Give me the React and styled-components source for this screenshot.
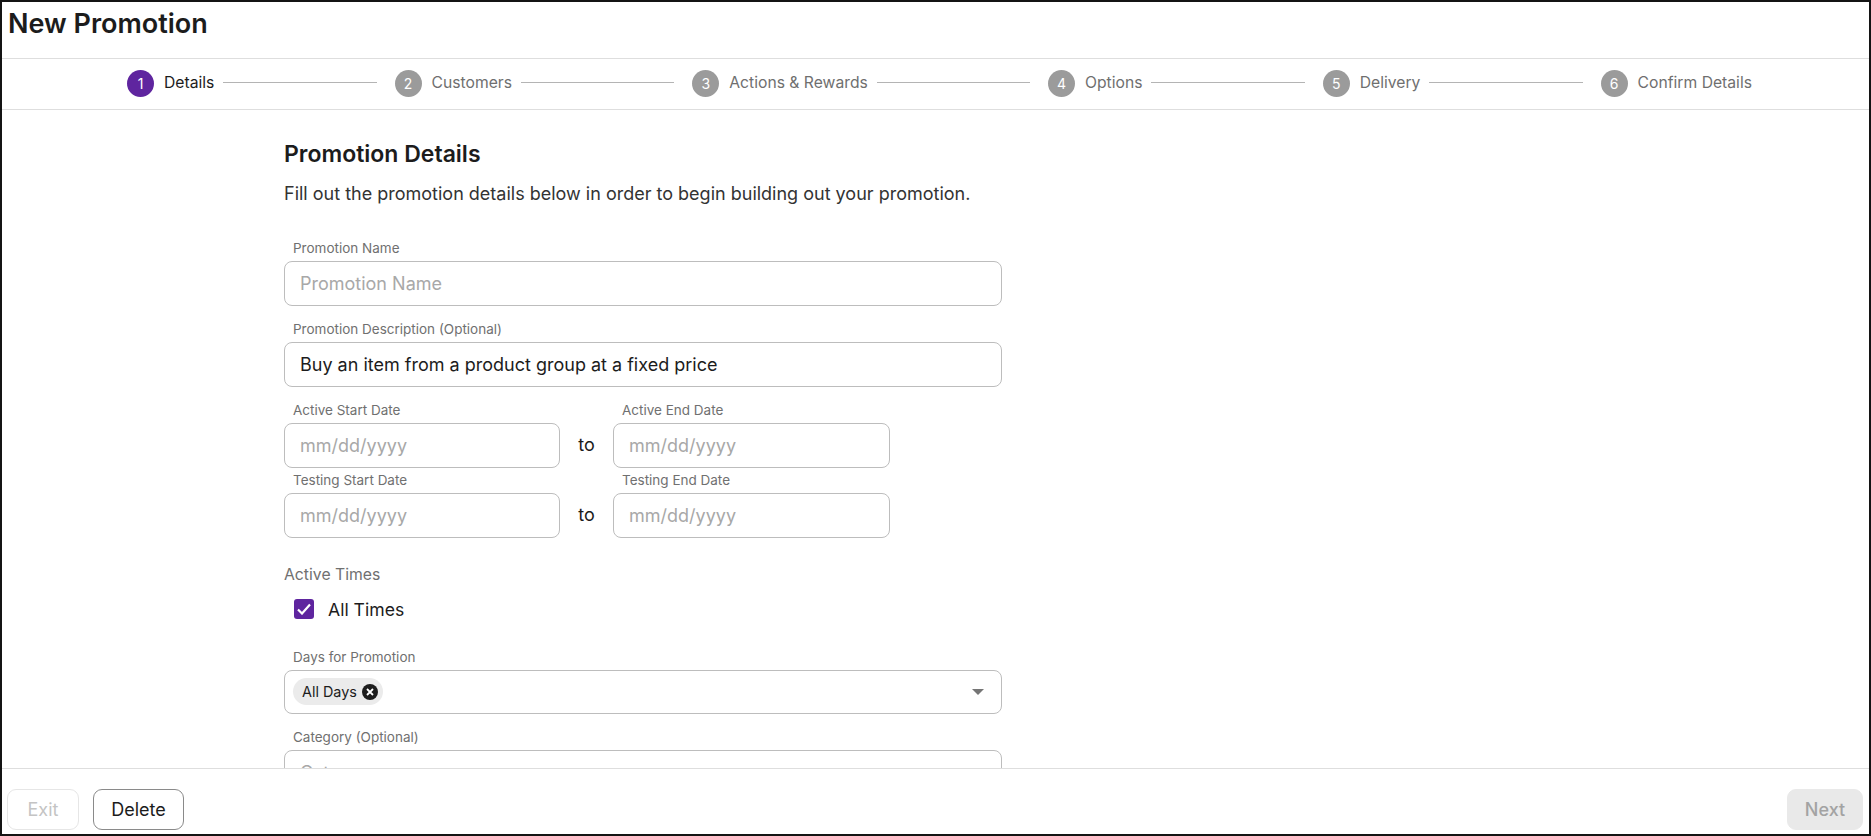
import React from "react";
import styled, { createGlobalStyle } from "styled-components";

const Global = createGlobalStyle`
  html, body { margin: 0; padding: 0; height: 100%; background: #fff; }
  #root { height: 836px; }
  * { box-sizing: border-box; }
`;

const Frame = styled.div`
  width: 1871px;
  height: 836px;
  border: 2px solid #141414;
  display: flex;
  flex-direction: column;
  overflow: hidden;
  font-family: Inter, "Liberation Sans", sans-serif;
  color: #1c1c1c;
  background: #fff;
`;

const Header = styled.header`
  height: 57px;
  flex: none;
  padding: 6px 0 0 6px;
  border-bottom: 1px solid #dedede;
`;

const Title = styled.h1`
  margin: 0;
  font-size: 27px;
  line-height: 32px;
  font-weight: 600;
`;

const Stepper = styled.nav`
  height: 51px;
  flex: none;
  display: flex;
  align-items: center;
  padding: 0 117px 1px 125px;
  border-bottom: 1px solid #dedede;
`;

const Step = styled.div`
  display: flex;
  align-items: center;
  flex: none;
`;

const StepNumber = styled.span`
  width: 27px;
  height: 27px;
  border-radius: 50%;
  display: flex;
  align-items: center;
  justify-content: center;
  font-size: 14px;
  color: #fff;
  background: ${(p) => (p.$active ? "#5f259f" : "#9b9b9b")};
`;

const StepLabel = styled.span`
  margin: 0 0 1px 10px;
  font-size: 15.7px;
  line-height: 20px;
  color: ${(p) => (p.$active ? "#1c1c1c" : "#6f6f6f")};
`;

const Connector = styled.span`
  flex: 1;
  height: 1px;
  margin: -2px 18px 0 9px;
  background: #b4b4b4;
`;

const Main = styled.main`
  flex: 1;
  min-height: 0;
  overflow: hidden;
  padding: 30px 0 0 282px;
`;

const Form = styled.form`
  width: 718px;
`;

const Heading = styled.h2`
  margin: 0;
  font-size: 23px;
  line-height: 28px;
  font-weight: 600;
`;

const Intro = styled.p`
  margin: 12px 0 30px;
  font-size: 18px;
  line-height: 28px;
  color: #333;
  white-space: nowrap;
`;

const Field = styled.div`
  width: ${(p) => p.$width || "718px"};
  margin-bottom: ${(p) => p.$after || "13px"};
`;

const Label = styled.label`
  display: block;
  height: 18px;
  margin: 0 0 5px 9px;
  font-size: 13.5px;
  line-height: 20px;
  color: #707070;
`;

const Input = styled.input`
  display: block;
  width: 100%;
  height: 45px;
  padding: 0 15px;
  border: 1px solid #bdbdbd;
  border-radius: 8px;
  outline: none;
  background: #fff;
  font-family: inherit;
  font-size: 18px;
  color: #1c1c1c;
  &::placeholder { color: #a8a8a8; opacity: 1; }
`;

const DateRow = styled.div`
  display: flex;
  align-items: flex-start;
`;

const To = styled.span`
  width: 53px;
  margin-top: 23px;
  text-align: center;
  font-size: 18px;
  line-height: 44px;
`;

const SectionLabel = styled.div`
  margin-top: 25px;
  font-size: 15.75px;
  line-height: 20px;
  color: #707070;
`;

const CheckRow = styled.label`
  display: flex;
  align-items: center;
  margin: 14px 0 28px 10px;
  height: 20px;
  font-size: 17.6px;
`;

const CheckBox = styled.span`
  width: 20px;
  height: 20px;
  border-radius: 3px;
  background: #5f259f;
  display: flex;
  align-items: center;
  justify-content: center;
  margin-right: 14px;
`;

const Select = styled.div`
  height: 44px;
  margin-bottom: 1px;
  display: flex;
  align-items: center;
  justify-content: space-between;
  padding: 0 17px 1px 8px;
  border: 1px solid #bdbdbd;
  border-radius: 8px;
`;

const Chip = styled.span`
  height: 27px;
  padding: 0 5px 0 9px;
  display: inline-flex;
  align-items: center;
  gap: 5px;
  border-radius: 14px;
  background: #ebebeb;
  font-size: 14.4px;
  color: #1c1c1c;
`;

const Caret = styled.span`
  width: 0;
  height: 0;
  border-left: 6px solid transparent;
  border-right: 6px solid transparent;
  border-top: 6px solid #757575;
`;

const Footer = styled.footer`
  height: 66px;
  flex: none;
  display: flex;
  align-items: flex-start;
  padding: 20px 6px 0 5px;
  border-top: 1px solid #dedede;
  background: #fff;
`;

const Button = styled.button`
  height: 41px;
  width: ${(p) => p.$width};
  margin-right: ${(p) => p.$gap || "0"};
  margin-left: ${(p) => (p.$push ? "auto" : "0")};
  border-radius: 9px;
  border: 1px solid ${(p) => p.$border};
  background: ${(p) => p.$bg || "#fff"};
  color: ${(p) => p.$color};
  font-family: inherit;
  font-size: 18px;
  font-weight: ${(p) => p.$weight || 400};
  padding: 0;
`;

const steps = ["Details", "Customers", "Actions & Rewards", "Options", "Delivery", "Confirm Details"];

const DateField = ({ label, width }) => (
  <Field $width={width} $after="2px">
    <Label>{label}</Label>
    <Input placeholder="mm/dd/yyyy" readOnly />
  </Field>
);

export default function App() {
  return (
    <>
      <Global />
      <Frame>
        <Header>
          <Title>New Promotion</Title>
        </Header>
        <Stepper>
          {steps.map((s, i) => (
            <React.Fragment key={s}>
              <Step>
                <StepNumber $active={i === 0}>{i + 1}</StepNumber>
                <StepLabel $active={i === 0}>{s}</StepLabel>
              </Step>
              {i < steps.length - 1 && <Connector />}
            </React.Fragment>
          ))}
        </Stepper>
        <Main>
          <Form>
            <Heading>Promotion Details</Heading>
            <Intro>Fill out the promotion details below in order to begin building out your promotion.</Intro>
            <Field>
              <Label>Promotion Name</Label>
              <Input placeholder="Promotion Name" readOnly />
            </Field>
            <Field>
              <Label>Promotion Description (Optional)</Label>
              <Input value="Buy an item from a product group at a fixed price" readOnly />
            </Field>
            <DateRow>
              <DateField label="Active Start Date" width="276px" />
              <To>to</To>
              <DateField label="Active End Date" width="277px" />
            </DateRow>
            <DateRow>
              <DateField label="Testing Start Date" width="276px" />
              <To>to</To>
              <DateField label="Testing End Date" width="277px" />
            </DateRow>
            <SectionLabel>Active Times</SectionLabel>
            <CheckRow>
              <CheckBox>
                <svg width="14" height="12" viewBox="0 0 14 12" fill="none">
                  <path d="M1 6.5 L5 10.5 L13 1.5" stroke="#fff" strokeWidth="2.2" />
                </svg>
              </CheckBox>
              All Times
            </CheckRow>
            <Field>
              <Label>Days for Promotion</Label>
              <Select>
                <Chip>
                  All Days
                  <svg width="16" height="16" viewBox="0 0 16 16">
                    <circle cx="8" cy="8" r="8" fill="#1c1c1c" />
                    <path d="M5 5 L11 11 M11 5 L5 11" stroke="#fff" strokeWidth="1.8" />
                  </svg>
                </Chip>
                <Caret />
              </Select>
            </Field>
            <Field>
              <Label>Category (Optional)</Label>
              <Input placeholder="Category" readOnly />
            </Field>
          </Form>
        </Main>
        <Footer>
          <Button $width="72px" $gap="14px" $border="#e6e6e6" $color="#c4c4c4">Exit</Button>
          <Button $width="91px" $border="#8a8a8a" $color="#1c1c1c">Delete</Button>
          <Button $push $width="76px" $border="#e9e9e9" $bg="#e9e9e9" $color="#a3a3a3" $weight={500}>Next</Button>
        </Footer>
      </Frame>
    </>
  );
}
